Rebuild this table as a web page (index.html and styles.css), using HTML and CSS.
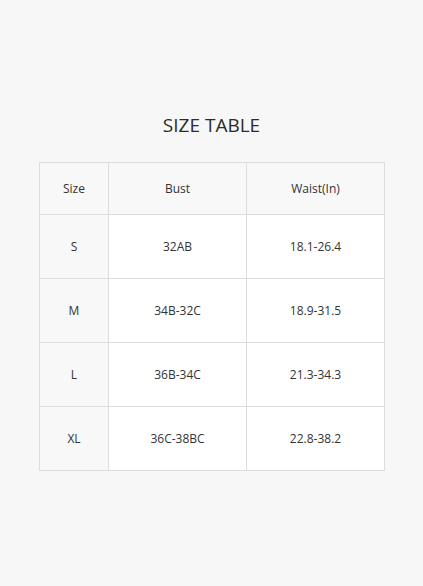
FILE: index.html
```html
<!DOCTYPE html>
<html>
<head>
<meta charset="utf-8">
<link rel="stylesheet" href="styles.css">
</head>
<body>
<div class="page">
  <h1 class="title">SIZE TABLE</h1>
  <table class="size-table">
    <thead>
      <tr><th class="c1">Size</th><th class="c2">Bust</th><th class="c3">Waist(In)</th></tr>
    </thead>
    <tbody>
      <tr><td class="first">S</td><td>32AB</td><td>18.1-26.4</td></tr>
      <tr><td class="first">M</td><td>34B-32C</td><td>18.9-31.5</td></tr>
      <tr><td class="first">L</td><td>36B-34C</td><td>21.3-34.3</td></tr>
      <tr><td class="first">XL</td><td>36C-38BC</td><td>22.8-38.2</td></tr>
    </tbody>
  </table>
</div>
</body>
</html>
```
FILE: styles.css
```css
html, body {
  margin: 0;
  padding: 0;
  background: #f7f7f7;
}
.page {
  width: 423px;
  height: 586px;
  padding-top: 112px;
  box-sizing: border-box;
  font-family: "Open Sans", sans-serif;
  color: #333;
}
.title {
  margin: 0 0 24px 0;
  text-align: center;
  font-size: 19px;
  font-weight: 400;
  line-height: 26px;
  color: #2b2b2b;
}
.size-table {
  margin-left: 39px;
  width: 346px;
  border-collapse: collapse;
  font-size: 12px;
}
.size-table th, .size-table td {
  border: 1px solid #dcdcdc;
  text-align: center;
  font-weight: 400;
  padding: 0;
}
.size-table th {
  height: 51px;
  background: #f8f8f8;
}
.size-table td {
  height: 63px;
  background: #fff;
}
.size-table td.first {
  background: #f8f8f8;
}
.c1 { width: 68px; }
.c2 { width: 137px; }
.c3 { width: 137px; }
```
